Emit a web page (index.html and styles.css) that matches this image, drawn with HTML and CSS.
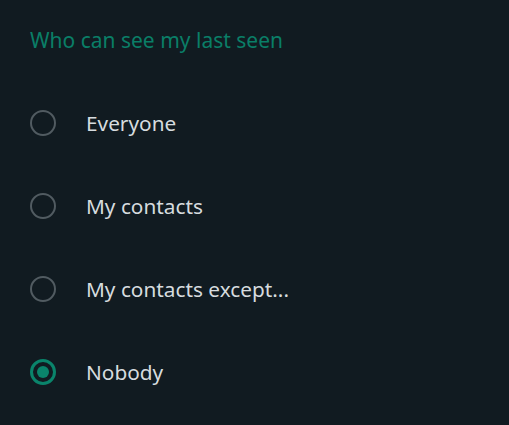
FILE: index.html
```html
<!DOCTYPE html>
<html lang="en">
<head>
    <meta charset="UTF-8">
    <meta name="viewport" content="width=device-width, initial-scale=1.0">
    <title>Last seen</title>
    <link rel="stylesheet" href="styles.css">
</head>
<body>
    <div class="panel">
        <h2 class="title">Who can see my last seen</h2>
        <div class="options">
            <label class="option"><span class="radio"></span><span class="label">Everyone</span></label>
            <label class="option"><span class="radio"></span><span class="label">My contacts</span></label>
            <label class="option"><span class="radio"></span><span class="label">My contacts except...</span></label>
            <label class="option"><span class="radio checked"></span><span class="label">Nobody</span></label>
        </div>
    </div>
</body>
</html>
```

FILE: styles.css
```css
body {
    margin: 0;
    background-color: #111b21;
    font-family: "Noto Sans", "Open Sans", sans-serif;
}
.panel {
    padding: 24px 30px 0 30px;
}
.title {
    margin: 0;
    font-size: 21px;
    font-weight: normal;
    color: #0a7e67;
    line-height: 32px;
}
.options {
    display: flex;
    flex-direction: column;
    gap: 57px;
    margin-top: 54px;
}
.option {
    display: flex;
    align-items: center;
    height: 26px;
}
.radio {
    box-sizing: border-box;
    flex-shrink: 0;
    width: 26px;
    height: 26px;
    border: 2px solid #515b61;
    border-radius: 50%;
    display: flex;
    align-items: center;
    justify-content: center;
}
.radio.checked {
    border: 3px solid #0a846b;
}
.radio.checked::after {
    content: "";
    width: 12px;
    height: 12px;
    border-radius: 50%;
    background-color: #0a846b;
}
.label {
    margin-left: 30px;
    font-size: 20.8px;
    color: #d6dcdf;
}
```
